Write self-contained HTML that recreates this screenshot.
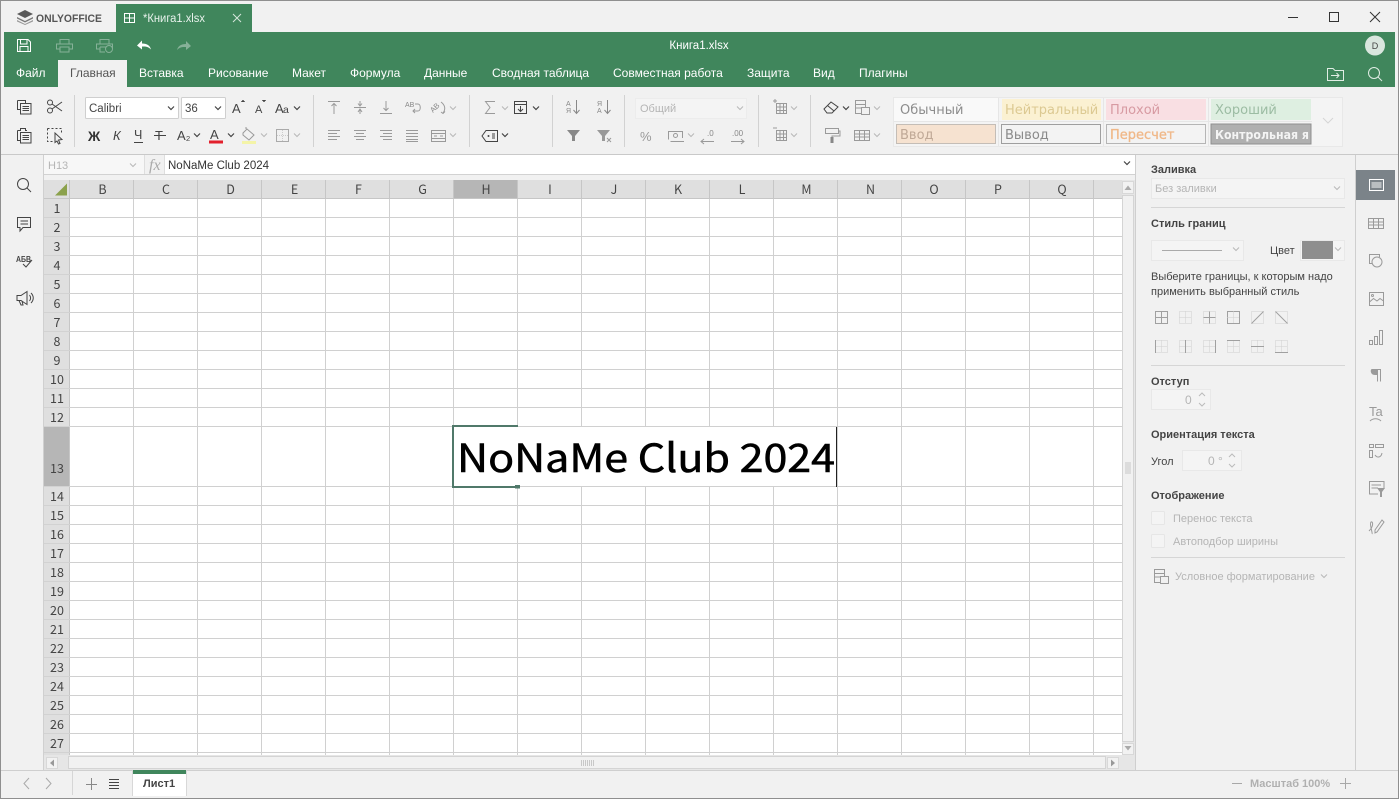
<!DOCTYPE html>
<html><head><meta charset="utf-8"><title>Книга1.xlsx</title>
<style>
html,body{margin:0;padding:0;width:1399px;height:799px;overflow:hidden;background:#f1f1f1}
svg{display:block;position:absolute;left:0;top:0}
text{font-family:"Liberation Sans",sans-serif;font-size:12px;fill:#444}
.m{fill:#fff;font-size:12px;text-anchor:start}
.h{font-family:"Noto Sans CJK SC","Liberation Sans",sans-serif;font-size:12.5px;fill:#444;text-anchor:middle}
.p{font-size:11px;fill:#444}
.b{font-size:11px;font-weight:bold;fill:#444}
.d{font-size:11px;fill:#b5b5b5}
.s{font-family:"DejaVu Sans",sans-serif;font-size:13px}
.i{fill:none;stroke:#444;stroke-width:1}
.g{fill:none;stroke:#9a9a9a;stroke-width:1}
</style></head><body>
<svg width="1399" height="799" viewBox="0 0 1399 799" xmlns="http://www.w3.org/2000/svg">
<defs>
<path id="c" d="M-3 -1.5L0 1.5L3 -1.5" fill="none" stroke="#444" stroke-width="1.2"/>
<path id="cg" d="M-3 -1.5L0 1.5L3 -1.5" fill="none" stroke="#b8b8b8" stroke-width="1"/>
</defs>
<rect width="1399" height="799" fill="#f1f1f1"/>

<!-- title bar -->
<g fill="#5a5a5a"><path d="M25 10L33 14L25 18L17 14Z"/><path d="M17 17L25 21L33 17V18.5L25 22.5L17 18.5Z" fill="#777"/><path d="M17 20L25 24L33 20V21.5L25 25L17 21.5Z" fill="#999"/></g>
<text x="36" y="22" textLength="66" lengthAdjust="spacingAndGlyphs" style="font-size:11px;font-weight:bold;fill:#555">ONLYOFFICE</text>
<rect x="116" y="4" width="136" height="28" fill="#40865c"/>
<path d="M124.500 13.500H134.500V22.500H124.500ZM129.500 13.500V22.500M124.500 18H134.500" fill="none" stroke="#fff" stroke-width="1"/>
<text x="143" y="22" textLength="62" lengthAdjust="spacingAndGlyphs" style="font-size:11.5px;fill:#e8f2ec">*Книга1.xlsx</text>
<path d="M233 14L241 22M241 14L233 22" stroke="#d5e6db" stroke-width="1" fill="none"/>
<path d="M1288 17.500H1298" stroke="#333"/>
<rect x="1329.500" y="12.500" width="9" height="9" fill="none" stroke="#333"/>
<path d="M1370 12L1380 22M1380 12L1370 22" stroke="#333" fill="none"/>

<!-- green header -->
<rect x="4" y="32" width="1391" height="55" fill="#40865c"/>
<path d="M17.500 39.500H28L30.500 42V51.500H17.500ZM20.500 39.500V44H27V39.500M20 51.500V46.500H28V51.500" fill="none" stroke="#fff" stroke-width="1"/>
<g fill="none" stroke="#86b198" stroke-width="1"><path d="M60 44V39.500H69V44M60 49H56.500V44H72.500V49H69M60 47H69V52H60Z"/><path d="M100 44V39.500H109V44M100 49H96.500V44H112.500V49M100 47H106M100 47V52H105"/><circle cx="109" cy="49" r="3.500"/></g>
<path d="M137 46L142 41V44C147 44 150 46 151 50C148 47 146 47 142 47V50Z" fill="#fff" transform="translate(0,-0.5)"/>
<path d="M191 46L186 41V44C181 44 178 46 177 50C180 47 182 47 186 47V50Z" fill="#86b198"/>
<text x="699" y="49" text-anchor="middle" style="font-size:11.5px;fill:#fff">Книга1.xlsx</text>
<circle cx="1375" cy="45.500" r="10" fill="#d9e6de"/>
<text x="1375" y="49" text-anchor="middle" style="font-size:9px;fill:#444">D</text>
<rect x="58" y="60" width="69" height="27" fill="#f1f1f1"/>
<text class="m" x="16" y="77">Файл</text>
<text class="m" x="70" y="77" style="fill:#555">Главная</text>
<text class="m" x="139" y="77">Вставка</text>
<text class="m" x="208" y="77">Рисование</text>
<text class="m" x="292" y="77">Макет</text>
<text class="m" x="350" y="77">Формула</text>
<text class="m" x="424" y="77">Данные</text>
<text class="m" x="492" y="77">Сводная таблица</text>
<text class="m" x="613" y="77">Совместная работа</text>
<text class="m" x="747" y="77">Защита</text>
<text class="m" x="813" y="77">Вид</text>
<text class="m" x="859" y="77">Плагины</text>
<path d="M1327.500 68.500H1333L1335 70.500H1343.500V80.500H1327.500ZM1331 75.500H1339M1336.500 73L1339 75.500L1336.500 78" fill="none" stroke="#e1ede5"/>
<circle cx="1374" cy="73" r="5.500" fill="none" stroke="#e1ede5"/><path d="M1378 77L1382 81" stroke="#e1ede5"/>

<!-- toolbar row left -->
<g class="i">
<path d="M17.500 100.500H25.500V103M17.500 100.500V109.500H20"/><rect x="20.500" y="103.500" width="10.500" height="10.500"/><path d="M22.500 106.500H29M22.500 108.500H29M22.500 110.500H29"/>
<circle cx="50" cy="102.500" r="2.500"/><circle cx="50" cy="110.500" r="2.500"/><path d="M52 104L62 111M52 109L62 102"/>
<path d="M17.500 130.500V140.500H20M17.500 130.500H20.500V128.500H25.500V130.500H27"/><rect x="20.500" y="132.500" width="10.500" height="10.500"/><path d="M22.500 135.500H29M22.500 137.500H29M22.500 139.500H29"/>
<path d="M47.500 128.500H61.500V134M47.500 128.500V141.500H53" stroke-dasharray="2 2"/><path d="M55 133L62 139.500L58.500 140L60 143.500L58.500 144L57 141L55 142.500Z"/>
</g>
<path d="M74.500 95V147M313.500 95V147M469.500 95V147M552.500 95V147M624.500 95V147M758.500 95V147M810.500 95V147" stroke="#d2d2d2"/>
<rect x="85.500" y="97.500" width="93" height="21" rx="1" fill="#fff" stroke="#cfcfcf"/>
<text x="89" y="112" style="font-size:11.5px">Calibri</text><use href="#c" x="171" y="108"/>
<rect x="181.500" y="97.500" width="44" height="21" rx="1" fill="#fff" stroke="#cfcfcf"/>
<text x="185" y="112" style="font-size:11.5px">36</text><use href="#c" x="218" y="108"/>
<text x="232" y="113" style="font-size:13px">A</text><path d="M241 102L243 100L245 102" fill="#444" stroke="#444" stroke-width=".5"/>
<text x="255" y="113" style="font-size:11px">A</text><path d="M262 100L264 102L266 100" fill="#444" stroke="#444" stroke-width=".5"/>
<text x="275" y="113" style="font-size:13px">A</text><text x="283" y="113" style="font-size:10.5px">a</text><use href="#c" x="297" y="108"/>
<text x="88" y="141" style="font-size:13.5px;font-weight:bold;fill:#333">Ж</text>
<text x="113" y="140" style="font-size:13px;font-style:italic">К</text>
<text x="134" y="139" style="font-size:12.5px">Ч</text><path d="M134 142.500H143" stroke="#444"/>
<text x="155" y="140" style="font-size:13px">Т</text><path d="M154 135.500H166" stroke="#444"/>
<text x="177" y="140" style="font-size:13px">A</text><text x="186" y="141" style="font-size:7.5px">2</text><use href="#c" x="197" y="135"/>
<text x="210" y="139" style="font-size:13px">A</text><rect x="209" y="140.500" width="14" height="3" fill="#e2202c"/><use href="#c" x="231" y="135"/>
<path d="M243 133L247 129L254 135L249 140L243 135ZM246 129V127" fill="none" stroke="#999"/><rect x="242" y="141" width="14" height="3" fill="#f4f4a8"/><use href="#cg" x="264" y="135"/>
<rect x="276.500" y="129.500" width="12" height="12" fill="none" stroke="#aaa"/><path d="M282.500 130V141M277 135.500H288" stroke="#ccc" stroke-dasharray="1 1"/><use href="#cg" x="297" y="135"/>

<!-- alignment -->
<g class="g">
<path d="M328 101.500H340M334 114V104M331.500 106L334 103.500L336.500 106"/>
<path d="M354 107.500H366M360 101V106M360 109V114M358 103.500L360 106L362 103.500M358 112L360 109L362 112"/>
<path d="M380 113.500H392M386 101V111M383.500 108L386 110.500L388.500 108"/>
<path d="M415 104H418C421 104 421 111 418 111H413M415 109L413 111L415 113"/>
<path d="M441 102C445 105 446 109 443 113M441 112L443 113.500L445 111.500"/>
<path d="M328 130.500H340M328 133.500H337M328 136.500H340M328 139.500H337"/>
<path d="M354 130.500H366M356 133.500H364M354 136.500H366M356 139.500H364"/>
<path d="M380 130.500H392M383 133.500H392M380 136.500H392M383 139.500H392"/>
<path d="M406 130.500H418M406 133.500H418M406 136.500H418M406 139.500H418M406 141.500H418"/>
<rect x="431.500" y="130.500" width="14" height="11"/><path d="M431.500 133.500H445.500M431.500 138.500H445.500M434 136H437M440 136H443"/>
</g>
<text x="405" y="107" style="font-size:7px;fill:#888">AB</text>
<text x="433" y="113" transform="rotate(-45 433 113)" style="font-size:7.5px;fill:#888">AB</text>
<use href="#cg" x="453" y="108"/><use href="#cg" x="453" y="135"/>

<!-- sum etc -->
<path d="M495 101.500H485.500L490 107.500L485.500 113.500H495" fill="none" stroke="#9a9a9a"/><use href="#cg" x="505" y="108"/>
<rect x="514.500" y="101.500" width="12" height="12" fill="none" stroke="#444"/><path d="M514.500 104.500H526.500M520.500 106V111.500M518 109L520.500 111.500L523 109" fill="none" stroke="#444"/><use href="#c" x="536" y="108"/>
<path d="M486 130.500H497.500V141.500H486L482 136Z" fill="none" stroke="#444"/><path d="M492 134H495M492 136H495M492 138H495" stroke="#444"/><circle cx="488.500" cy="136" r="1" fill="#444"/><use href="#c" x="505" y="135"/>
<!-- sort/filter -->
<text x="566" y="106" style="font-size:7px;fill:#888">А</text><text x="566" y="113" style="font-size:7px;fill:#888">Я</text>
<path d="M576.500 100V113M573.500 110L576.500 113.500L579.500 110" fill="none" stroke="#888"/>
<text x="597" y="106" style="font-size:7px;fill:#888">Я</text><text x="597" y="113" style="font-size:7px;fill:#888">А</text>
<path d="M607.500 100V113M604.500 110L607.500 113.500L610.500 110" fill="none" stroke="#888"/>
<path d="M567 130H580L575 136V141H572V136Z" fill="#888"/>
<path d="M597 130H610L605 136V141H602V136Z" fill="#999"/><path d="M607 138L611 142M611 138L607 142" stroke="#999"/>
<!-- number -->
<rect x="635.500" y="98.500" width="111" height="20" fill="#f4f4f4" stroke="#ececec"/>
<text x="640" y="112" class="d">Общий</text><use href="#cg" x="740" y="108"/>
<text x="640" y="141" style="font-size:13px;fill:#999">%</text>
<g class="g"><path d="M668.500 139.500V131.500H682.500V138M670.500 141.500H684"/><circle cx="675.500" cy="135.500" r="2"/></g>
<use href="#cg" x="691" y="135"/>
<text x="707" y="136" style="font-size:8px;fill:#888">.0</text><path d="M714 141.500H701M704 139L701 141.500L704 144" class="g"/>
<text x="732" y="136" style="font-size:8px;fill:#888">.00</text><path d="M731 141.500H744M741 139L744 141.500L741 144" class="g"/>
<!-- cells -->
<g class="g"><rect x="776.500" y="103.500" width="10" height="10"/><path d="M776.500 107H786.500M776.500 110.500H786.500M780 103.500V113.500M783.500 103.500V113.500M773 101H777M775 99V103"/>
<rect x="776.500" y="130.500" width="10" height="10"/><path d="M776.500 134H786.500M776.500 137.500H786.500M780 130.500V140.500M783.500 130.500V140.500M773 128H777"/></g>
<use href="#cg" x="794" y="108"/><use href="#cg" x="794" y="135"/>
<path d="M824 109L831 102L838 107L832 113H827ZM827.500 105.500L834 111" fill="none" stroke="#444"/><use href="#c" x="846" y="108"/>
<g class="g"><rect x="855.500" y="100.500" width="10" height="13"/><path d="M855.500 104.500H865.500M855.500 108H861"/><rect x="861.500" y="107.500" width="8" height="7" fill="#f1f1f1"/></g><use href="#cg" x="877" y="108"/>
<g class="g"><path d="M825.500 128.500H838.500V133.500H825.500ZM838.500 131H840V136H832V138"/></g><rect x="830.500" y="137" width="3" height="6" fill="#888"/>
<g class="g"><rect x="854.500" y="130.500" width="15" height="10"/><path d="M854.500 134H869.500M854.500 137H869.500M859.500 130.500V140.500M864.500 130.500V140.500"/></g><use href="#cg" x="877" y="135"/>

<!-- styles gallery -->
<rect x="893.500" y="97.500" width="449" height="49" fill="#f4f4f4" stroke="#e8e8e8"/>
<rect x="894" y="98" width="104" height="23" fill="#f9f9f9"/>
<rect x="1002" y="99" width="99" height="21" fill="#fbf1d2"/>
<rect x="1106" y="99" width="100" height="21" fill="#f9dfe3"/>
<rect x="1211" y="99" width="100" height="21" fill="#deefe1"/>
<path d="M998.500 98V146M1103.500 98V146M1208.500 98V146M894 121.500H1312" stroke="#e6e6e6"/>
<rect x="896.500" y="124.500" width="99" height="19" fill="#f6e2d0" stroke="#c4bdb6"/>
<rect x="1001.500" y="124.500" width="99" height="19" fill="#f3f3f3" stroke="#9f9f9f"/>
<rect x="1106.500" y="124.500" width="99" height="19" fill="#f3f3f3" stroke="#b5b5b5"/>
<rect x="1211" y="124" width="100" height="20" fill="#b0b0b0" stroke="#8f8f8f"/>
<text class="s" x="900" y="114" style="fill:#8d8d8d">Обычный</text>
<text class="s" x="1005" y="114" style="fill:#dcc992">Нейтральный</text>
<text class="s" x="1110" y="114" style="fill:#d79aa2">Плохой</text>
<text class="s" x="1215" y="114" style="fill:#9cbca3">Хороший</text>
<text class="s" x="900" y="139" style="fill:#bfa896">Ввод</text>
<text class="s" x="1005" y="139" style="fill:#8a8a8a">Вывод</text>
<text class="s" x="1110" y="139" style="fill:#f0b888;stroke:#f0b888;stroke-width:.3">Пересчет</text>
<text class="s" x="1215" y="139" textLength="94" lengthAdjust="spacingAndGlyphs" style="fill:#f4f4f4;font-weight:bold;font-size:12.5px">Контрольная я</text>
<path d="M1323 118L1328 123L1333 118" fill="none" stroke="#d5d5d5"/>

<path d="M0 154.500H1399" stroke="#c9c9c9"/>

<!-- formula bar -->
<rect x="44" y="155" width="100" height="19" fill="#f7f7f7"/>
<text x="48" y="169" class="d">H13</text><use href="#cg" x="133" y="165"/>
<path d="M144.500 155V174M164.500 155V174" stroke="#dedede"/>
<text x="149" y="170" style="font-family:'Liberation Serif',serif;font-style:italic;font-size:16px;fill:#aaa">fx</text>
<rect x="165" y="155" width="970" height="19" fill="#fff"/>
<text x="168" y="169" style="font-size:11.5px;fill:#333">NoNaMe Club 2024</text>
<use href="#c" x="1127" y="163"/>
<path d="M44 174.500H1135" stroke="#d2d2d2"/>

<!-- left bar -->
<path d="M43.500 155V770" stroke="#d0d0d0"/>
<circle cx="23" cy="184" r="5.500" class="i"/><path d="M27 188L31 192" class="i"/>
<path d="M17.500 217.500H30.500V227.500H23L20 231V227.500H17.500ZM20.500 221H28M20.500 224H28" class="i"/>
<text x="16" y="262" textLength="15" lengthAdjust="spacingAndGlyphs" style="font-size:8.5px;font-weight:bold">АБВ</text><path d="M23 264L26 267L32 260" class="i"/>
<path d="M17 295.500H21L27 291.500V304.500L21 300.500H17ZM19 300.500L21 305H23L22 301M29.500 295C31 297 31 299 29.500 301M31 293C34 296 34 300 31 303" class="i"/>

<!-- grid -->
<rect x="70" y="199" width="1052" height="556" fill="#fff"/>
<rect x="44" y="180" width="1078" height="19" fill="#dfdfdf"/>
<rect x="44" y="199" width="26" height="556" fill="#dfdfdf"/>
<rect x="453" y="180" width="65" height="19" fill="#b6b6b6"/>
<rect x="44" y="427" width="26" height="60" fill="#b6b6b6"/>
<path d="M55 195.500L67 195.500L67 183.500Z" fill="#8ba14c"/>
<path d="M133.500 199V755M197.500 199V755M261.500 199V755M325.500 199V755M389.500 199V755M453.500 199V755M517.500 199V755M581.500 199V755M645.500 199V755M709.500 199V755M773.500 199V755M837.500 199V755M901.500 199V755M965.500 199V755M1029.500 199V755M1093.500 199V755" stroke="#d0d0d0"/>
<path d="M70 217.500H1122M70 236.500H1122M70 255.500H1122M70 274.500H1122M70 293.500H1122M70 312.500H1122M70 331.500H1122M70 350.500H1122M70 369.500H1122M70 388.500H1122M70 407.500H1122M70 426.500H1122M70 486.500H1122M70 505.500H1122M70 524.500H1122M70 543.500H1122M70 562.500H1122M70 581.500H1122M70 600.500H1122M70 619.500H1122M70 638.500H1122M70 657.500H1122M70 676.500H1122M70 695.500H1122M70 714.500H1122M70 733.500H1122M70 752.500H1122" stroke="#d0d0d0"/>
<path d="M69.500 180V755M133.500 180V199M197.500 180V199M261.500 180V199M325.500 180V199M389.500 180V199M453.500 180V199M517.500 180V199M581.500 180V199M645.500 180V199M709.500 180V199M773.500 180V199M837.500 180V199M901.500 180V199M965.500 180V199M1029.500 180V199M1093.500 180V199M44 198.500H1122" stroke="#c6c6c6"/>
<path d="M44 217.500H70M44 236.500H70M44 255.500H70M44 274.500H70M44 293.500H70M44 312.500H70M44 331.500H70M44 350.500H70M44 369.500H70M44 388.500H70M44 407.500H70M44 426.500H70M44 486.500H70M44 505.500H70M44 524.500H70M44 543.500H70M44 562.500H70M44 581.500H70M44 600.500H70M44 619.500H70M44 638.500H70M44 657.500H70M44 676.500H70M44 695.500H70M44 714.500H70M44 733.500H70M44 752.500H70" stroke="#d2d2d2"/>
<g>
<text class="h" x="102.500" y="194">B</text><text class="h" x="166" y="194">C</text><text class="h" x="230.500" y="194">D</text><text class="h" x="294.500" y="194">E</text><text class="h" x="358.500" y="194">F</text><text class="h" x="422.500" y="194">G</text><text class="h" x="486" y="194">H</text><text class="h" x="550" y="194">I</text><text class="h" x="614" y="194">J</text><text class="h" x="678" y="194">K</text><text class="h" x="742" y="194">L</text><text class="h" x="806.500" y="194">M</text><text class="h" x="870.500" y="194">N</text><text class="h" x="934" y="194">O</text><text class="h" x="998" y="194">P</text><text class="h" x="1062" y="194">Q</text>
<text class="h" x="57" y="213">1</text><text class="h" x="57" y="232">2</text><text class="h" x="57" y="251">3</text><text class="h" x="57" y="270">4</text><text class="h" x="57" y="289">5</text><text class="h" x="57" y="308">6</text><text class="h" x="57" y="327">7</text><text class="h" x="57" y="346">8</text><text class="h" x="57" y="365">9</text><text class="h" x="57" y="384">10</text><text class="h" x="57" y="403">11</text><text class="h" x="57" y="422">12</text><text class="h" x="57" y="473">13</text><text class="h" x="57" y="501">14</text><text class="h" x="57" y="520">15</text><text class="h" x="57" y="539">16</text><text class="h" x="57" y="558">17</text><text class="h" x="57" y="577">18</text><text class="h" x="57" y="596">19</text><text class="h" x="57" y="615">20</text><text class="h" x="57" y="634">21</text><text class="h" x="57" y="653">22</text><text class="h" x="57" y="672">23</text><text class="h" x="57" y="691">24</text><text class="h" x="57" y="710">25</text><text class="h" x="57" y="729">26</text><text class="h" x="57" y="748">27</text>
</g>

<!-- editor -->
<rect x="454" y="427" width="382" height="59" fill="#fff"/>
<path d="M518 426H453V487H516" fill="none" stroke="#50796a" stroke-width="2"/>
<rect x="515" y="485" width="5" height="3.500" fill="#50796a"/>
<path d="M836.500 427V487" stroke="#222"/>
<text x="457" y="472" textLength="378" lengthAdjust="spacingAndGlyphs" style="font-family:'Noto Sans CJK SC','DejaVu Sans',sans-serif;font-size:39px;fill:#000;stroke:#000;stroke-width:.6">NoNaMe Club 2024</text>

<!-- scrollbars -->
<rect x="1122" y="180" width="13" height="590" fill="#e6e6e6"/>
<rect x="44" y="755" width="1091" height="15" fill="#e6e6e6"/>
<rect x="1122.500" y="181.500" width="11" height="12" fill="#f2f2f2" stroke="#d8d8d8"/>
<path d="M1124.500 190L1128 185.500L1131.500 190Z" fill="#aaa"/>
<rect x="1122.500" y="195.500" width="11" height="546" fill="#f1f1f1" stroke="#d4d4d4"/>
<rect x="1122.500" y="743.500" width="11" height="11" fill="#f2f2f2" stroke="#d8d8d8"/>
<path d="M1124.500 746L1128 750.500L1131.500 746Z" fill="#aaa"/>
<rect x="46.500" y="757.500" width="11" height="11" fill="#f2f2f2" stroke="#d8d8d8"/>
<path d="M54 759.500L50 763L54 766.500Z" fill="#999"/>
<rect x="68.500" y="756.500" width="1037" height="12" fill="#f1f1f1" stroke="#d4d4d4"/>
<rect x="1107.500" y="757.500" width="11" height="11" fill="#f2f2f2" stroke="#d8d8d8"/>
<path d="M1111 759.500L1115 763L1111 766.500Z" fill="#999"/>
<path d="M581.500 760V766M583.500 760V766M585.500 760V766M587.500 760V766M589.500 760V766M591.500 760V766M593.500 760V766" stroke="#c8c8c8"/>
<path d="M1125 463H1131M1125 465H1131M1125 467H1131M1125 469H1131M1125 471H1131M1125 473H1131" stroke="#c8c8c8"/>

<!-- right panel -->
<path d="M1135.500 155V770M1355.500 155V770" stroke="#cfcfcf"/>
<text class="b" x="1151" y="173">Заливка</text>
<rect x="1151.500" y="178.500" width="193" height="20" fill="#f4f4f4" stroke="#e8e8e8"/>
<text class="d" x="1155" y="192">Без заливки</text><use href="#cg" x="1337" y="188"/>
<path d="M1151 207.500H1345M1151 365.500H1345M1151 557.500H1345" stroke="#d6d6d6"/>
<text class="b" x="1151" y="227">Стиль границ</text>
<rect x="1151.500" y="240.500" width="92" height="20" fill="#f4f4f4" stroke="#e8e8e8"/>
<path d="M1162 250.500H1222" stroke="#aaa"/><use href="#cg" x="1236" y="249"/>
<text class="p" x="1270" y="254">Цвет</text>
<rect x="1300.500" y="240.500" width="44" height="20" fill="#f4f4f4" stroke="#e8e8e8"/>
<rect x="1302" y="241" width="31" height="18" fill="#8e8e8e"/><use href="#cg" x="1338" y="249"/>
<text class="p" x="1151" y="280">Выберите границы, к которым надо</text>
<text class="p" x="1151" y="295">применить выбранный стиль</text>
<g fill="none" stroke="#a0a0a0">
<path d="M1155.500 311.500H1167.500V323.500H1155.500ZM1161.500 311.500V323.500M1155.500 317.500H1167.500"/>
<path d="M1179.500 311.500H1191.500V323.500H1179.500ZM1185.500 311.500V323.500M1179.500 317.500H1191.500" stroke="#d0d0d0" stroke-dasharray="1 1"/>
<path d="M1203.500 311.500H1215.500V323.500H1203.500Z" stroke="#d0d0d0" stroke-dasharray="1 1"/><path d="M1209.500 311.500V323.500M1203.500 317.500H1215.500"/>
<path d="M1227.500 311.500H1239.500V323.500H1227.500Z"/><path d="M1233.500 311.500V323.500M1227.500 317.500H1239.500" stroke="#d0d0d0" stroke-dasharray="1 1"/>
<path d="M1251.500 311.500H1263.500V323.500H1251.500Z" stroke="#d0d0d0" stroke-dasharray="1 1"/><path d="M1251.500 323.500L1263.500 311.500"/>
<path d="M1275.500 311.500H1287.500V323.500H1275.500Z" stroke="#d0d0d0" stroke-dasharray="1 1"/><path d="M1275.500 311.500L1287.500 323.500"/>
<path d="M1155.500 340.500H1167.500V352.500H1155.500ZM1161.500 340.500V352.500M1155.500 346.500H1167.500" stroke="#d0d0d0" stroke-dasharray="1 1"/><path d="M1155.500 340V353"/>
<path d="M1179.500 340.500H1191.500V352.500H1179.500ZM1179.500 346.500H1191.500" stroke="#d0d0d0" stroke-dasharray="1 1"/><path d="M1185.500 340V353"/>
<path d="M1203.500 340.500H1215.500V352.500H1203.500ZM1209.500 340.500V352.500M1203.500 346.500H1215.500" stroke="#d0d0d0" stroke-dasharray="1 1"/><path d="M1215.500 340V353"/>
<path d="M1227.500 340.500H1239.500V352.500H1227.500ZM1233.500 340.500V352.500M1227.500 346.500H1239.500" stroke="#d0d0d0" stroke-dasharray="1 1"/><path d="M1227 340.500H1240"/>
<path d="M1251.500 340.500H1263.500V352.500H1251.500ZM1257.500 340.500V352.500" stroke="#d0d0d0" stroke-dasharray="1 1"/><path d="M1251 346.500H1264"/>
<path d="M1275.500 340.500H1287.500V352.500H1275.500ZM1281.500 340.500V352.500M1275.500 346.500H1287.500" stroke="#d0d0d0" stroke-dasharray="1 1"/><path d="M1275 352.500H1288"/>
</g>
<text class="b" x="1151" y="385">Отступ</text>
<rect x="1151.500" y="389.500" width="59" height="20" fill="#f4f4f4" stroke="#e8e8e8"/>
<text class="d" x="1185" y="404" style="font-size:12px">0</text>
<path d="M1199 396L1202 393L1205 396M1199 403L1202 406L1205 403" fill="none" stroke="#bbb"/>
<text class="b" x="1151" y="438">Ориентация текста</text>
<text class="p" x="1151" y="465">Угол</text>
<rect x="1182.500" y="450.500" width="59" height="20" fill="#f4f4f4" stroke="#e8e8e8"/>
<text class="d" x="1208" y="465" style="font-size:12px">0 °</text>
<path d="M1229 457L1232 454L1235 457M1229 464L1232 467L1235 464" fill="none" stroke="#bbb"/>
<text class="b" x="1151" y="499">Отображение</text>
<rect x="1151.500" y="511.500" width="13" height="13" rx="1" fill="#f4f4f4" stroke="#e6e6e6"/>
<text class="d" x="1173" y="522">Перенос текста</text>
<rect x="1151.500" y="534.500" width="13" height="13" rx="1" fill="#f4f4f4" stroke="#e6e6e6"/>
<text class="d" x="1173" y="545">Автоподбор ширины</text>
<g class="g"><rect x="1154.500" y="569.500" width="10" height="13"/><path d="M1154.500 573.500H1164.500M1154.500 577H1160"/><rect x="1160.500" y="576.500" width="8" height="7" fill="#f1f1f1"/></g>
<text class="d" x="1175" y="580">Условное форматирование</text><use href="#cg" x="1324" y="576"/>

<!-- right icons -->
<rect x="1356" y="170" width="39" height="30" fill="#7b8389"/>
<rect x="1369.500" y="179.500" width="14" height="11" fill="none" stroke="#fff"/><rect x="1371.500" y="182" width="10" height="6" fill="#b9bec1"/>
<g class="g">
<rect x="1368.500" y="218.500" width="15" height="10"/><path d="M1368.500 222H1383.500M1368.500 225H1383.500M1373.500 218.500V228.500M1378.500 218.500V228.500"/>
<path d="M1372 263.500H1369.500V254.500H1379.500V257"/><circle cx="1377" cy="262" r="5"/>
<rect x="1369.500" y="292.500" width="14" height="13"/><path d="M1369.500 302L1373.500 298.500L1377 301L1380 298.500L1383.500 301"/><circle cx="1372.500" cy="295.500" r="1"/>
<rect x="1369.500" y="340.500" width="3" height="4"/><rect x="1374.500" y="336.500" width="3" height="8"/><rect x="1379.500" y="330.500" width="3" height="14"/>
<path d="M1377.500 369.500V381.500M1380.500 369.500V381.500M1372 369.500H1381"/>
<rect x="1369.500" y="444.500" width="4" height="3"/><rect x="1375.500" y="444.500" width="8" height="3"/><rect x="1369.500" y="450.500" width="3" height="7"/><path d="M1375 455C1377 458 1381 458 1382 453"/>
<path d="M1384 489V481.500H1369.500V494H1378M1371.500 485H1381M1371.500 488H1378"/>
<path d="M1369 531C1374 526 1373 521 1371 522C1369 524 1373 533 1372 534M1375 530L1382 520L1384 522L1377 532L1375 533Z"/>
</g>
<path d="M1372 369H1377V375H1375C1370 375 1370 369 1372 369Z" fill="#9a9a9a"/>
<text x="1369" y="416" style="font-size:13px;fill:#9a9a9a">Ta</text><path d="M1370 421C1373 418 1378 418 1381 421" class="g"/>
<path d="M1377 488H1385L1382 492V497H1380V492Z" fill="#9a9a9a"/>

<!-- bottom bar -->
<path d="M0 770.500H1399" stroke="#cfcfcf"/>
<path d="M29 778L24 783.500L29 789M46 778L51 783.500L46 789" fill="none" stroke="#aaa"/>
<path d="M72.500 771V795" stroke="#d6d6d6"/>
<path d="M91.500 778V790M86 784.500H97" stroke="#888"/>
<path d="M109 779.500H119M109 782.500H119M109 785.500H119M109 788.500H119" stroke="#444"/>
<rect x="133" y="770" width="53" height="26" fill="#fff"/>
<rect x="133" y="770" width="53" height="4" fill="#40865c"/>
<path d="M132.500 770V796M186.500 770V796" stroke="#d8d8d8"/>
<text x="143" y="787" style="font-size:11px;font-weight:bold">Лист1</text>
<path d="M1232 783.500H1242M1340 783.500H1351M1345.500 778V789" stroke="#a8a8a8"/>
<text x="1250" y="787" style="font-size:11px;font-weight:bold;fill:#b0b0b0">Масштаб 100%</text>

<!-- window frame -->
<rect x="0.500" y="0.500" width="1398" height="798" fill="none" stroke="#8f8f8f"/>
</svg>
</body></html>
